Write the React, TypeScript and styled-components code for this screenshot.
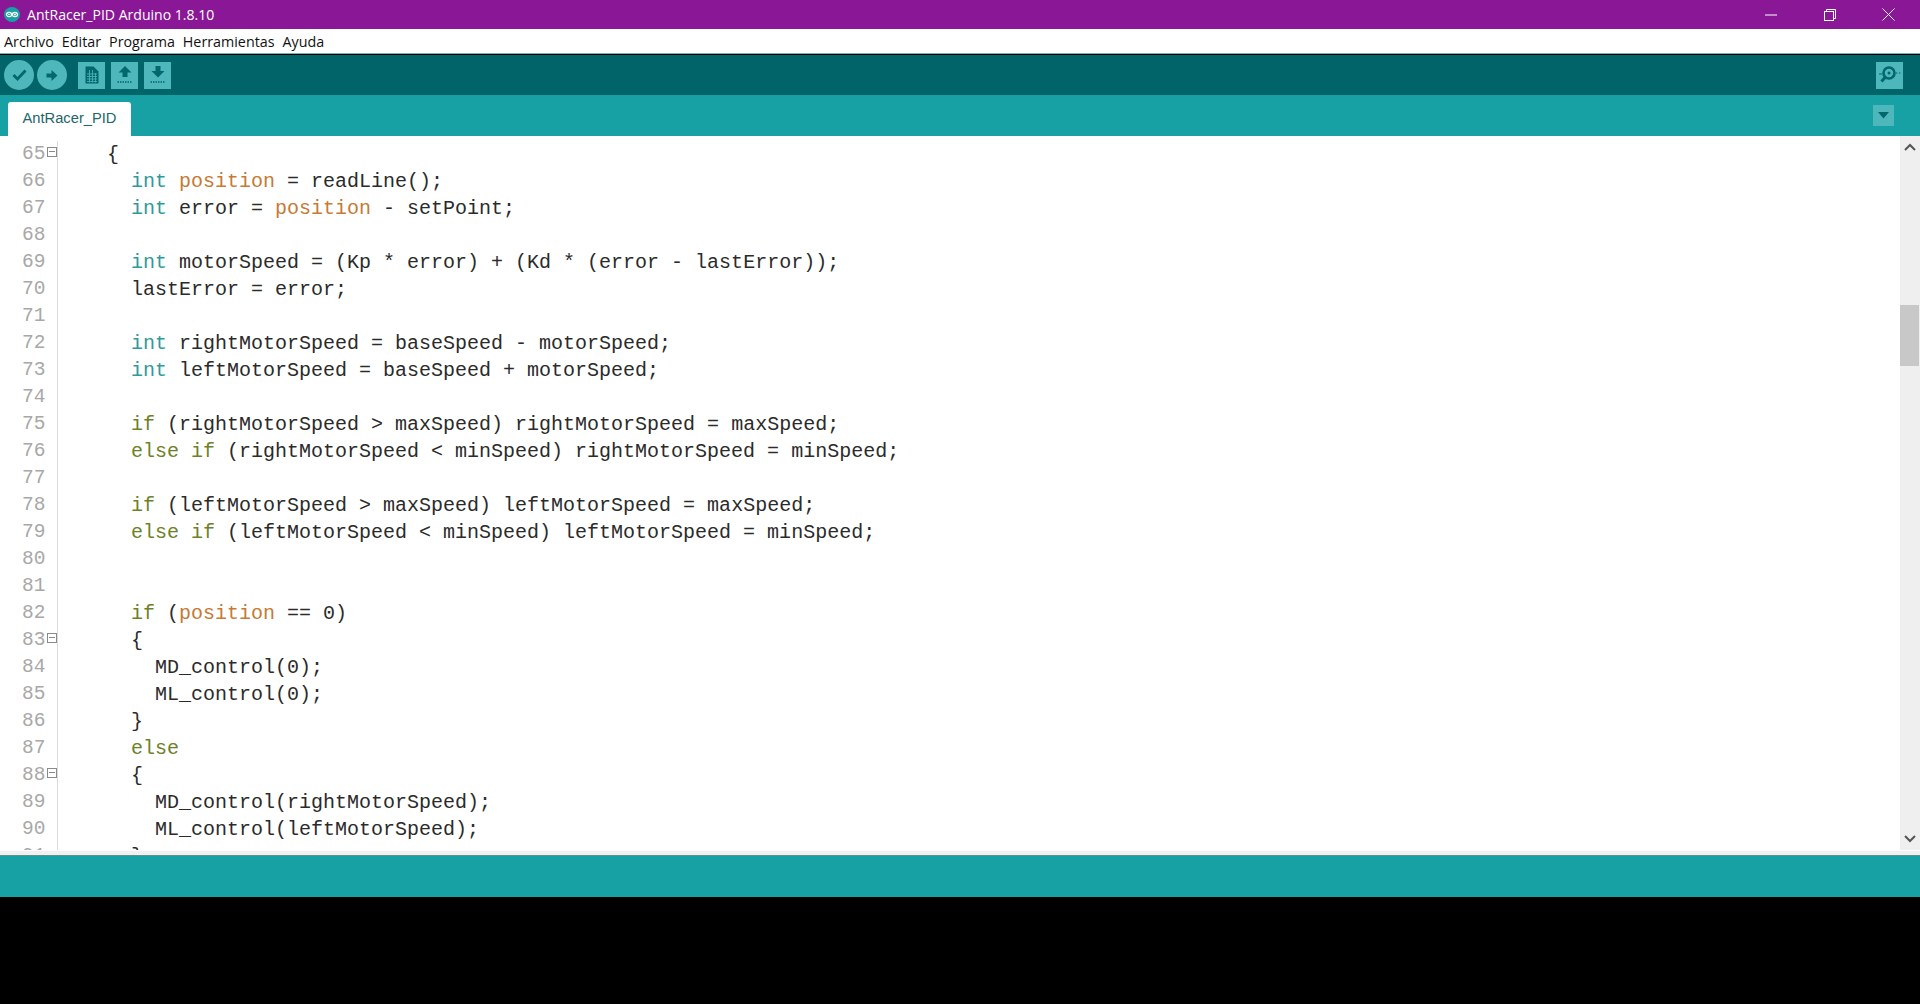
import { createGlobalStyle } from 'styled-components';
import styled from 'styled-components';

const GlobalStyle = createGlobalStyle`
  html, body {
    margin: 0;
    padding: 0;
    background: #000;
  }
  body {
    font-family: "Open Sans", "Liberation Sans", sans-serif;
  }
`;

type Token = { text: string; kind?: 'type' | 'flow' | 'var' };

const t = (kind: Token['kind'], text: string): Token => ({ kind, text });
const p = (text: string): Token => ({ text });

const lines: { n: number; fold?: boolean; tokens: Token[] }[] = [
  { n: 65, fold: true, tokens: [p('    {')] },
  { n: 66, tokens: [p('      '), t('type', 'int'), p(' '), t('var', 'position'), p(' = readLine();')] },
  { n: 67, tokens: [p('      '), t('type', 'int'), p(' error = '), t('var', 'position'), p(' - setPoint;')] },
  { n: 68, tokens: [] },
  { n: 69, tokens: [p('      '), t('type', 'int'), p(' motorSpeed = (Kp * error) + (Kd * (error - lastError));')] },
  { n: 70, tokens: [p('      lastError = error;')] },
  { n: 71, tokens: [] },
  { n: 72, tokens: [p('      '), t('type', 'int'), p(' rightMotorSpeed = baseSpeed - motorSpeed;')] },
  { n: 73, tokens: [p('      '), t('type', 'int'), p(' leftMotorSpeed = baseSpeed + motorSpeed;')] },
  { n: 74, tokens: [] },
  { n: 75, tokens: [p('      '), t('flow', 'if'), p(' (rightMotorSpeed > maxSpeed) rightMotorSpeed = maxSpeed;')] },
  { n: 76, tokens: [p('      '), t('flow', 'else if'), p(' (rightMotorSpeed < minSpeed) rightMotorSpeed = minSpeed;')] },
  { n: 77, tokens: [] },
  { n: 78, tokens: [p('      '), t('flow', 'if'), p(' (leftMotorSpeed > maxSpeed) leftMotorSpeed = maxSpeed;')] },
  { n: 79, tokens: [p('      '), t('flow', 'else if'), p(' (leftMotorSpeed < minSpeed) leftMotorSpeed = minSpeed;')] },
  { n: 80, tokens: [] },
  { n: 81, tokens: [] },
  { n: 82, tokens: [p('      '), t('flow', 'if'), p(' ('), t('var', 'position'), p(' == 0)')] },
  { n: 83, fold: true, tokens: [p('      {')] },
  { n: 84, tokens: [p('        MD_control(0);')] },
  { n: 85, tokens: [p('        ML_control(0);')] },
  { n: 86, tokens: [p('      }')] },
  { n: 87, tokens: [p('      '), t('flow', 'else')] },
  { n: 88, fold: true, tokens: [p('      {')] },
  { n: 89, tokens: [p('        MD_control(rightMotorSpeed);')] },
  { n: 90, tokens: [p('        ML_control(leftMotorSpeed);')] },
  { n: 91, tokens: [p('      }')] },
];

const Page = styled.div`
  width: 1920px;
  height: 1004px;
  display: flex;
  flex-direction: column;
  background: #000;
  overflow: hidden;
`;

const TitleBar = styled.div`
  height: 29px;
  background: #8a1795;
  color: #fff;
  display: flex;
  align-items: center;
  padding-left: 4px;
  padding-right: 2px;
  font-size: 14.05px;
`;

const TitleText = styled.span`
  margin-left: 7px;
  flex: 1;
`;

const WindowButton = styled.div`
  width: 59px;
  height: 29px;
  display: flex;
  align-items: center;
  justify-content: center;
`;

const MenuBar = styled.div`
  height: 24px;
  background: #fff;
  display: flex;
  align-items: center;
  gap: 8px;
  padding-left: 4px;
  font-size: 14.3px;
  color: #111;
  border-bottom: 1px solid #7fb0b3;
`;

const Toolbar = styled.div`
  height: 40px;
  margin-top: 1px;
  background: #006468;
  display: flex;
  align-items: center;
  padding-left: 4px;
  padding-right: 17px;
`;

const RoundButton = styled.div`
  width: 30px;
  height: 30px;
  border-radius: 50%;
  background: #4db7bb;
  margin-right: 3px;
  display: flex;
  align-items: center;
  justify-content: center;
`;

const SquareButton = styled.div<{ $first?: boolean }>`
  width: 27px;
  height: 27px;
  background: #4db7bb;
  margin-left: ${(props) => (props.$first ? '8px' : '6px')};
  display: flex;
  align-items: center;
  justify-content: center;
`;

const Spacer = styled.div`
  flex: 1;
`;

const TabBar = styled.div`
  height: 41px;
  background: #17a1a5;
  display: flex;
  align-items: flex-end;
  padding-left: 8px;
  padding-right: 26px;
`;

const Tab = styled.div`
  width: 123px;
  height: 34px;
  padding-bottom: 2px;
  box-sizing: border-box;
  background: #fff;
  border-radius: 3px 3px 0 0;
  color: #1d6669;
  font-family: "Liberation Sans", sans-serif;
  font-size: 14.7px;
  display: flex;
  align-items: center;
  justify-content: center;
`;

const TabMenu = styled.div`
  width: 21px;
  height: 21px;
  margin-bottom: 10px;
  background: #4db7bb;
  display: flex;
  align-items: center;
  justify-content: center;
`;

const Editor = styled.div`
  height: 714px;
  background: #fff;
  display: flex;
  overflow: hidden;
`;

const Code = styled.div`
  flex: 1;
  overflow: hidden;
  padding-top: 5px;
`;

const Row = styled.div`
  height: 27px;
  display: flex;
  font-family: "Liberation Mono", monospace;
  font-size: 20px;
  line-height: 27px;
  color: #2b2b2b;
  white-space: pre;
`;

const LineNumber = styled.div`
  width: 58px;
  flex: none;
  position: relative;
  box-sizing: border-box;
  padding-left: 22px;
  color: #a8a8a8;
  font-size: 19.5px;
  border-right: 1px solid #dcdcdc;
`;

const FoldBox = styled.div`
  position: absolute;
  left: 47px;
  top: 6px;
  width: 8px;
  height: 8px;
  border: 1px solid #8a8a8a;
  &::after {
    content: '';
    position: absolute;
    left: 1px;
    right: 1px;
    top: 3px;
    height: 1px;
    background: #8a8a8a;
  }
`;

const Source = styled.div`
  padding-left: 1px;
`;

const Word = styled.span<{ $kind?: Token['kind'] }>`
  color: ${(props) =>
    props.$kind === 'type'
      ? '#2f9a9e'
      : props.$kind === 'flow'
        ? '#6d8227'
        : props.$kind === 'var'
          ? '#c67a35'
          : 'inherit'};
`;

const ScrollBar = styled.div`
  width: 20px;
  flex: none;
  background: #efefef;
  display: flex;
  flex-direction: column;
  align-items: center;
  justify-content: space-between;
  position: relative;
  padding: 7px 0;
  box-sizing: border-box;
`;

const ScrollThumb = styled.div`
  position: absolute;
  left: 0;
  top: 169px;
  width: 19px;
  height: 61px;
  background: #c8c8c8;
`;

const EditorEdge = styled.div`
  height: 5px;
  background: #f0f0f0;
  border-top: 1px solid #fff;
  box-sizing: border-box;
`;

const Status = styled.div`
  height: 42px;
  background: #17a1a5;
  border-top: 1px solid #5f8f92;
  box-sizing: border-box;
`;

const Console = styled.div`
  flex: 1;
  background: #000;
`;

const iconDark = '#00686c';
const iconFace = '#4db7bb';

function ArduinoLogo() {
  return (
    <svg width="16" height="15" viewBox="0 0 16 15">
      <ellipse cx="8" cy="7.5" rx="8" ry="7.5" fill="#17a1a5" />
      <g fill="none" stroke="#fff" strokeWidth="1.2">
        <ellipse cx="5.1" cy="7.5" rx="2.6" ry="2.2" />
        <ellipse cx="10.9" cy="7.5" rx="2.6" ry="2.2" />
      </g>
      <path d="M4 7.5h2.2M9.8 7.5h2.2M10.9 6.4v2.2" stroke="#fff" strokeWidth="0.8" />
    </svg>
  );
}

export default function App() {
  return (
    <Page>
      <GlobalStyle />
      <TitleBar>
        <ArduinoLogo />
        <TitleText>AntRacer_PID Arduino 1.8.10</TitleText>
        <WindowButton>
          <svg width="12" height="2" viewBox="0 0 12 2">
            <path d="M0 1h12" stroke="#fff" strokeWidth="1" />
          </svg>
        </WindowButton>
        <WindowButton>
          <svg width="12" height="12" viewBox="0 0 12 12" fill="none" stroke="#fff">
            <rect x="0.5" y="2.5" width="9" height="9" />
            <path d="M2.5 2.5V0.5h9v9H9.5" />
          </svg>
        </WindowButton>
        <WindowButton>
          <svg width="13" height="13" viewBox="0 0 13 13">
            <path d="M0.5 0.5l12 12M12.5 0.5l-12 12" stroke="#fff" strokeWidth="1" />
          </svg>
        </WindowButton>
      </TitleBar>
      <MenuBar>
        <span>Archivo</span>
        <span>Editar</span>
        <span>Programa</span>
        <span>Herramientas</span>
        <span>Ayuda</span>
      </MenuBar>
      <Toolbar>
        <RoundButton>
          <svg width="15" height="12" viewBox="0 0 15 12">
            <path d="M1.5 6l4 4 8-8.5" fill="none" stroke={iconDark} strokeWidth="2.8" />
          </svg>
        </RoundButton>
        <RoundButton>
          <svg width="12" height="11" viewBox="0 0 12 11">
            <path d="M0.5 3.5h5V0l6 5.5-6 5.5V7.5h-5z" fill={iconDark} />
          </svg>
        </RoundButton>
        <SquareButton $first>
          <svg width="14" height="18" viewBox="0 0 14 18">
            <path d="M0.5 0.5h8l5 5v12H0.5z" fill={iconDark} />
            <path d="M2 8h10M2 10.5h10M2 13h10M2 15.5h10M4.5 4v12.5M7.5 4v12.5M10.5 7v9.5" stroke={iconFace} strokeWidth="0.8" />
          </svg>
        </SquareButton>
        <SquareButton>
          <svg width="16" height="18" viewBox="0 0 16 18">
            <path d="M8 0l6.5 6.5H10.5V11h-5V6.5H1.5z" fill={iconDark} />
            <path d="M0.5 16h15" stroke={iconDark} strokeWidth="1.3" strokeDasharray="1.5 1" />
          </svg>
        </SquareButton>
        <SquareButton>
          <svg width="16" height="18" viewBox="0 0 16 18">
            <path d="M5.5 0h5v5h4L8 11.5 1.5 5h4z" fill={iconDark} />
            <path d="M0.5 16h15" stroke={iconDark} strokeWidth="1.3" strokeDasharray="1.5 1" />
          </svg>
        </SquareButton>
        <Spacer />
        <SquareButton>
          <svg width="23" height="20" viewBox="0 0 23 20">
            <circle cx="11" cy="8" r="5.5" fill="none" stroke={iconDark} strokeWidth="2.6" />
            <circle cx="11" cy="8" r="1.5" fill={iconDark} />
            <path d="M7 12.5l-3.5 4" stroke={iconDark} strokeWidth="3" />
            <path d="M1 9h3M18 8h1.4M21 8h1.4" stroke={iconDark} strokeWidth="1" />
          </svg>
        </SquareButton>
      </Toolbar>
      <TabBar>
        <Tab>AntRacer_PID</Tab>
        <Spacer />
        <TabMenu>
          <svg width="11" height="7" viewBox="0 0 11 7">
            <path d="M0 0h11L5.5 6.5z" fill={iconDark} />
          </svg>
        </TabMenu>
      </TabBar>
      <Editor>
        <Code>
          {lines.map((line) => (
            <Row key={line.n}>
              <LineNumber>
                {line.n}
                {line.fold && <FoldBox />}
              </LineNumber>
              <Source>
                {line.tokens.map((token, i) => (
                  <Word key={i} $kind={token.kind}>
                    {token.text}
                  </Word>
                ))}
              </Source>
            </Row>
          ))}
        </Code>
        <ScrollBar>
          <svg width="12" height="8" viewBox="0 0 12 8">
            <path d="M1 7l5-5 5 5" fill="none" stroke="#555" strokeWidth="2" />
          </svg>
          <ScrollThumb />
          <svg width="12" height="8" viewBox="0 0 12 8">
            <path d="M1 1l5 5 5-5" fill="none" stroke="#555" strokeWidth="2" />
          </svg>
        </ScrollBar>
      </Editor>
      <EditorEdge />
      <Status />
      <Console />
    </Page>
  );
}
